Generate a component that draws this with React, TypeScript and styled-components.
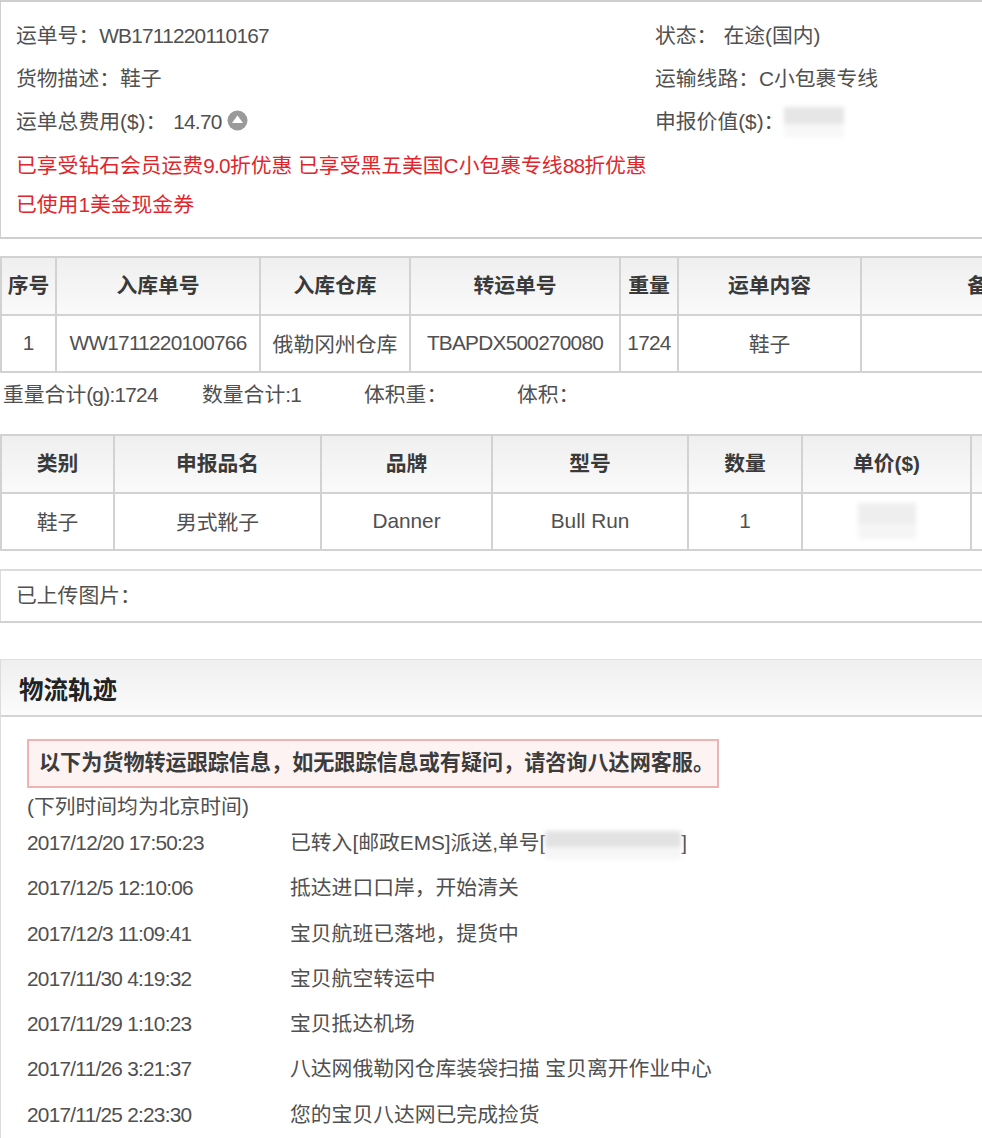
import React from 'react';
import styled, { createGlobalStyle } from 'styled-components';

const GlobalStyle = createGlobalStyle`
  html, body {
    margin: 0;
    padding: 0;
    background: #fff;
    overflow: hidden;
  }
  body {
    width: 982px;
    height: 1138px;
    font-family: "Liberation Sans", "Noto Sans CJK SC", sans-serif;
    font-size: 20.8px;
    color: #505050;
  }
`;

const Page = styled.div`
  width: 982px;
  height: 1138px;
  overflow: hidden;
`;

const Latin = styled.span`
  letter-spacing: -0.74px;
`;

const InfoPanel = styled.div`
  box-sizing: border-box;
  width: 1000px;
  height: 239px;
  border-top: 2px solid #cfcfcf;
  border-left: 1px solid #cfcfcf;
  border-bottom: 2px solid #cfcfcf;
  padding: 12px 0 0 15px;
`;

const InfoRow = styled.div`
  display: grid;
  grid-template-columns: 639px 1fr;
  height: 43px;
  line-height: 43px;
`;

const InfoCell = styled.div`
  display: flex;
  align-items: center;
  white-space: pre;
`;

const Status = styled.span`
  margin-left: 6px;
`;

const Amount = styled.span`
  margin-left: 7px;
  letter-spacing: -0.74px;
`;

const ToggleIcon = styled.svg`
  width: 21px;
  height: 21px;
  margin: -3px 0 0 5px;
`;

const Promo = styled.div<{ $height: number }>`
  color: #e0262d;
  height: ${(p) => p.$height}px;
  line-height: ${(p) => p.$height}px;
  white-space: nowrap;
`;

const Smudge = styled.span<{ $w: number; $h: number; $dark: string; $light: string }>`
  display: inline-block;
  width: ${(p) => p.$w}px;
  height: ${(p) => p.$h}px;
  background: linear-gradient(${(p) => p.$dark} 0 58%, ${(p) => p.$light} 58% 100%);
  filter: blur(2px);
  vertical-align: middle;
`;

const Table = styled.table<{ $top: number; $width: number }>`
  border-collapse: collapse;
  table-layout: fixed;
  width: ${(p) => p.$width}px;
  margin-top: ${(p) => p.$top}px;
`;

const Th = styled.th<{ $w: number }>`
  box-sizing: border-box;
  width: ${(p) => p.$w}px;
  height: 57.5px;
  padding: 0 0 3px;
  border: 2px solid #d2d2d2;
  background: linear-gradient(#efefef, #fafafa);
  color: #3a3a3a;
  font-weight: 700;
  text-align: center;
`;

const Td = styled.td`
  box-sizing: border-box;
  height: 57.5px;
  padding: 0 0 1px;
  border: 2px solid #d2d2d2;
  text-align: center;
  white-space: nowrap;
`;

const Totals = styled.div`
  display: flex;
  height: 43px;
  line-height: 44px;
  padding-left: 3px;
`;

const Total = styled.span<{ $w: number }>`
  width: ${(p) => p.$w}px;
  white-space: pre;
`;

const UploadPanel = styled.div`
  box-sizing: border-box;
  width: 1000px;
  height: 54px;
  margin-top: 18px;
  border-top: 2px solid #dcdcdc;
  border-left: 1px solid #dcdcdc;
  border-bottom: 2px solid #d2d2d2;
  padding-left: 15px;
  line-height: 50px;
`;

const Section = styled.section`
  margin-top: 36px;
  border-left: 1px solid #dcdcdc;
`;

const SectionHead = styled.h2`
  box-sizing: border-box;
  margin: 0;
  height: 58px;
  padding-left: 18px;
  border-top: 1px solid #dedede;
  border-bottom: 2px solid #d4d4d4;
  background: linear-gradient(#efefef, #fbfbfb);
  color: #222;
  font-size: 24.5px;
  font-weight: 700;
  line-height: 61px;
`;

const SectionBody = styled.div`
  padding: 22px 0 0 26px;
`;

const Notice = styled.div`
  box-sizing: border-box;
  width: 692px;
  height: 49px;
  padding-left: 10px;
  border: 2px solid #eeb4b4;
  background: #fdf3f3;
  color: #3c3c3c;
  font-size: 21.1px;
  font-weight: 700;
  line-height: 44px;
  white-space: nowrap;
`;

const Hint = styled.div`
  height: 37px;
  line-height: 38px;
`;

const Track = styled.div`
  display: grid;
  grid-template-columns: 263px 1fr;
  height: 45.3px;
  line-height: 36px;
  white-space: nowrap;
`;

const trackRows = [
  ['2017/12/5 12:10:06', '抵达进口口岸，开始清关'],
  ['2017/12/3 11:09:41', '宝贝航班已落地，提货中'],
  ['2017/11/30 4:19:32', '宝贝航空转运中'],
  ['2017/11/29 1:10:23', '宝贝抵达机场'],
  ['2017/11/26 3:21:37', '八达网俄勒冈仓库装袋扫描 宝贝离开作业中心'],
  ['2017/11/25 2:23:30', '您的宝贝八达网已完成捡货'],
];

export default function App() {
  return (
    <Page>
      <GlobalStyle />
      <InfoPanel>
        <InfoRow>
          <InfoCell>运单号：<Latin>WB1711220110167</Latin></InfoCell>
          <InfoCell>状态：<Status>在途(国内)</Status></InfoCell>
        </InfoRow>
        <InfoRow>
          <InfoCell>货物描述：鞋子</InfoCell>
          <InfoCell>运输线路：C小包裹专线</InfoCell>
        </InfoRow>
        <InfoRow>
          <InfoCell>
            运单总费用($)：<Amount>14.70</Amount>
            <ToggleIcon viewBox="0 0 21 21">
              <circle cx="10.5" cy="10.5" r="10" fill="#9a9a9a" />
              <path d="M10.5 5.5 16 13H5z" fill="#fff" />
            </ToggleIcon>
          </InfoCell>
          <InfoCell>
            申报价值($)：<Smudge $w={60} $h={30} $dark="#e6e6e6" $light="#f7f7f7" />
          </InfoCell>
        </InfoRow>
        <Promo $height={45}>已享受钻石会员运费<Latin>9.0</Latin>折优惠 已享受黑五美国C小包裹专线<Latin>88</Latin>折优惠</Promo>
        <Promo $height={34}>已使用1美金现金券</Promo>
      </InfoPanel>

      <Table $top={17} $width={1114}>
        <thead>
          <tr>
            <Th $w={55}>序号</Th>
            <Th $w={204}>入库单号</Th>
            <Th $w={150}>入库仓库</Th>
            <Th $w={210}>转运单号</Th>
            <Th $w={58}>重量</Th>
            <Th $w={183}>运单内容</Th>
            <Th $w={254}>备注</Th>
          </tr>
        </thead>
        <tbody>
          <tr>
            <Td>1</Td>
            <Td><Latin>WW1711220100766</Latin></Td>
            <Td>俄勒冈州仓库</Td>
            <Td><Latin>TBAPDX500270080</Latin></Td>
            <Td><Latin>1724</Latin></Td>
            <Td>鞋子</Td>
            <Td />
          </tr>
        </tbody>
      </Table>

      <Totals>
        <Total $w={199}>重量合计<Latin>(g):1724</Latin></Total>
        <Total $w={162}>数量合计<Latin>:1</Latin></Total>
        <Total $w={153}>体积重：</Total>
        <Total $w={100}>体积：</Total>
      </Totals>

      <Table $top={18} $width={1099}>
        <thead>
          <tr>
            <Th $w={113}>类别</Th>
            <Th $w={207}>申报品名</Th>
            <Th $w={171}>品牌</Th>
            <Th $w={196}>型号</Th>
            <Th $w={114}>数量</Th>
            <Th $w={169}>单价($)</Th>
            <Th $w={129} />
          </tr>
        </thead>
        <tbody>
          <tr>
            <Td>鞋子</Td>
            <Td>男式靴子</Td>
            <Td>Danner</Td>
            <Td>Bull Run</Td>
            <Td>1</Td>
            <Td><Smudge $w={58} $h={36} $dark="#eeeeee" $light="#f5f5f5" /></Td>
            <Td />
          </tr>
        </tbody>
      </Table>

      <UploadPanel>已上传图片：</UploadPanel>

      <Section>
        <SectionHead>物流轨迹</SectionHead>
        <SectionBody>
          <Notice>以下为货物转运跟踪信息，如无跟踪信息或有疑问，请咨询八达网客服。</Notice>
          <Hint>(下列时间均为北京时间)</Hint>
          <Track>
            <Latin>2017/12/20 17:50:23</Latin>
            <span>已转入[邮政EMS]派送,单号[<Smudge $w={136} $h={28} $dark="#e2e2e2" $light="#f6f6f6" />]</span>
          </Track>
          {trackRows.map(([time, text]) => (
            <Track key={time}>
              <Latin>{time}</Latin>
              <span>{text}</span>
            </Track>
          ))}
        </SectionBody>
      </Section>
    </Page>
  );
}
